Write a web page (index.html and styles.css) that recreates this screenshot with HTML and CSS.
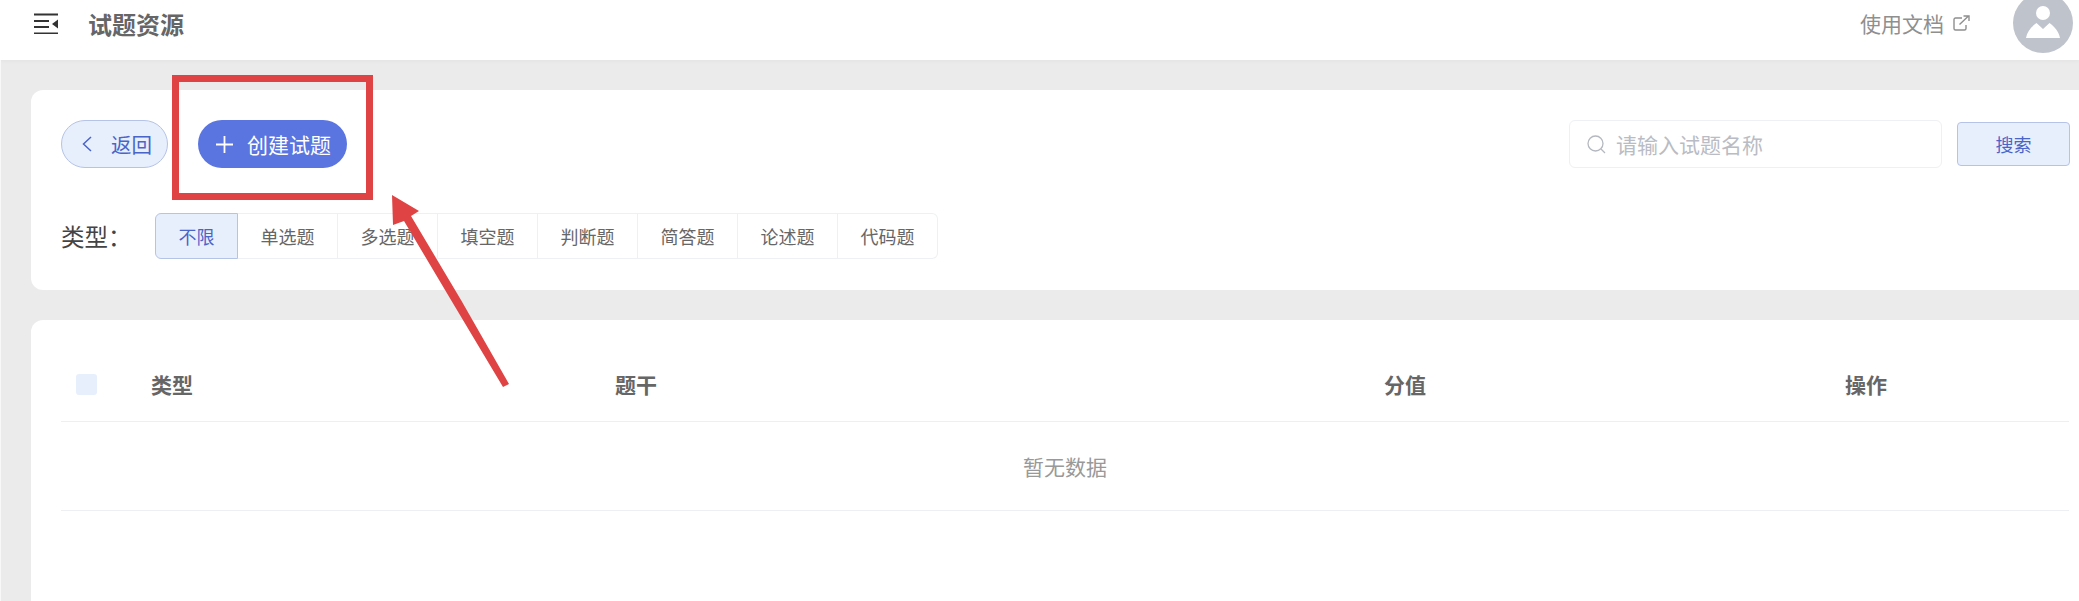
FILE: index.html
```html
<!DOCTYPE html>
<html lang="zh-CN">
<head>
    <meta charset="UTF-8">
    <meta name="viewport" content="width=device-width, initial-scale=1.0">
    <title>试题资源</title>
    <link rel="stylesheet" href="styles.css">
</head>
<body>

    <!-- Header -->
    <header class="top-bar">
        <svg class="menu-icon" width="24" height="21" viewBox="0 0 24 21">
            <path d="M0 1.500h24M0 8h15M0 14h15M0 20.500h24" stroke="#333" stroke-width="2" fill="none"/>
            <path d="M24 6.500v9l-6-4.500z" fill="#333"/>
        </svg>
        <span class="page-title">试题资源</span>
        <a class="doc-link" href="#">使用文档
            <svg width="17" height="16" viewBox="0 0 17 16" fill="none" stroke="#8f8f8f" stroke-width="1.4">
                <path d="M9 3H2.500A1.500 1.500 0 0 0 1 4.500V13.500A1.500 1.500 0 0 0 2.500 15H11.500A1.500 1.500 0 0 0 13 13.500V10"/>
                <path d="M6.500 9.500L15.500 1M10.500 1H16V6"/>
            </svg>
        </a>
        <div class="avatar">
            <svg width="60" height="60" viewBox="0 0 60 60">
                <circle cx="30" cy="20" r="7" fill="#fff"/>
                <path d="M13 45C14 39 18 34 23.500 30L30 36 36.500 30C42 34 46 39 47 45z" fill="#fff"/>
            </svg>
        </div>
    </header>

    <main class="content">
        <!-- Filter card -->
        <section class="card filter-card">
            <div class="toolbar">
                <button class="btn-back">
                    <svg width="10" height="16" viewBox="0 0 10 16" fill="none" stroke="#4a64c8" stroke-width="1.500"><path d="M9 1L1.500 8 9 15"/></svg>
                    返回
                </button>
                <button class="btn-create">
                    <svg width="17" height="17" viewBox="0 0 17 17" stroke="#fff" stroke-width="1.800"><path d="M8.500 0v17M0 8.500h17"/></svg>
                    创建试题
                </button>
                <div class="search-box">
                    <svg width="19" height="19" viewBox="0 0 19 19" fill="none" stroke="#b4b8c0" stroke-width="1.300"><circle cx="8.500" cy="8.500" r="7.500"/><path d="M14 14l4 4"/></svg>
                    <input type="text" placeholder="请输入试题名称">
                </div>
                <button class="btn-search">搜索</button>
            </div>
            <div class="type-row">
                <span class="type-label">类型：</span>
                <div class="type-group">
                    <a class="type-item active" href="#">不限</a>
                    <a class="type-item" href="#">单选题</a>
                    <a class="type-item" href="#">多选题</a>
                    <a class="type-item" href="#">填空题</a>
                    <a class="type-item" href="#">判断题</a>
                    <a class="type-item" href="#">简答题</a>
                    <a class="type-item" href="#">论述题</a>
                    <a class="type-item" href="#">代码题</a>
                </div>
            </div>
        </section>

        <!-- Question table -->
        <section class="card table-card">
            <table class="question-table">
                <thead>
                    <tr>
                        <th class="col-check"><span class="checkbox"></span></th>
                        <th class="col-type">类型</th>
                        <th class="col-stem">题干</th>
                        <th class="col-score">分值</th>
                        <th>操作</th>
                    </tr>
                </thead>
                <tbody>
                    <tr>
                        <td class="empty-text" colspan="5">暂无数据</td>
                    </tr>
                </tbody>
            </table>
        </section>
    </main>

    <!-- Red annotation drawn over the screenshot -->
    <div class="mark-box"></div>
    <svg class="mark-arrow" width="2079" height="601" viewBox="0 0 2079 601">
        <path d="M392 195L419 211 411 216 461 300 509 384 503 387 451 300 404 221 393 225z" fill="#e04343"/>
    </svg>

</body>
</html>
```

FILE: styles.css
```css
body {
    font-family: "Noto Sans CJK SC", "Liberation Sans", sans-serif;
    margin: 0;
    height: 601px;
    overflow: hidden;
    background-color: #ebebeb;
    position: relative;
}
button {
    font-family: inherit;
    cursor: pointer;
}
.top-bar {
    display: flex;
    align-items: center;
    height: 46px;
    padding: 0 6px 14px 34px;
    background-color: #fff;
    box-shadow: 0 1px 4px rgba(0, 0, 0, 0.04);
}
.menu-icon {
    margin-right: 30px;
}
.page-title {
    font-size: 24px;
    font-weight: bold;
    color: #666;
}
.doc-link {
    display: flex;
    align-items: center;
    gap: 9px;
    margin-left: auto;
    margin-right: 43px;
    font-size: 21px;
    color: #8f8f8f;
    text-decoration: none;
}
.avatar {
    width: 60px;
    height: 60px;
    border-radius: 50%;
    background-color: #bfc3cc;
    flex-shrink: 0;
}
.content {
    padding: 30px 0 0 30px;
    border-left: 1px solid #f8f8f8;
}
.card {
    background-color: #fff;
    border-radius: 12px 0 0 12px;
}
.filter-card {
    height: 170px;
    padding: 30px 9px 0 30px;
}
.toolbar {
    display: flex;
    align-items: center;
    height: 48px;
}
.btn-back,
.btn-create {
    display: flex;
    align-items: center;
    height: 48px;
    border-radius: 24px;
    font-size: 20.500px;
}
.btn-back {
    width: 107px;
    padding: 0 0 0 20px;
    gap: 19px;
    background-color: #e8effc;
    border: 1px solid #b5c3e6;
    color: #4a64c8;
}
.btn-create {
    width: 149px;
    margin-left: 30px;
    padding: 0 0 0 18px;
    gap: 14px;
    background-color: #5a74e0;
    border: none;
    color: #fff;
    font-size: 21px;
}
.search-box {
    display: flex;
    align-items: center;
    gap: 8px;
    box-sizing: border-box;
    width: 373px;
    height: 48px;
    margin-left: auto;
    padding-left: 17px;
    border: 1px solid #eef0f3;
    border-radius: 6px;
}
.search-box input {
    flex: 1;
    min-width: 0;
    border: none;
    outline: none;
    font-family: inherit;
    font-size: 21px;
}
.search-box input::placeholder {
    color: #b9bcc4;
}
.btn-search {
    box-sizing: border-box;
    width: 113px;
    height: 44px;
    margin-left: 15px;
    background-color: #e8effc;
    border: 1px solid #b5c3e6;
    border-radius: 4px;
    color: #4a64c8;
    font-size: 18px;
}
.type-row {
    display: flex;
    align-items: center;
    margin-top: 45px;
}
.type-label {
    width: 94px;
    font-size: 23.500px;
    color: #444;
}
.type-group {
    display: flex;
    height: 46px;
}
.type-item {
    display: flex;
    align-items: center;
    justify-content: center;
    box-sizing: border-box;
    width: 100px;
    border: 1px solid #eef0f3;
    border-left: none;
    font-size: 18px;
    color: #666;
    text-decoration: none;
}
.type-item:last-child {
    border-radius: 0 6px 6px 0;
}
.type-item.active {
    width: 83px;
    background-color: #e8effc;
    border: 1px solid #b5c3e6;
    border-radius: 6px 0 0 6px;
    color: #4a64c8;
}
.table-card {
    height: 300px;
    margin-top: 30px;
    padding: 0 9px 0 30px;
}
.question-table {
    width: 2008px;
    border-collapse: collapse;
    table-layout: fixed;
}
.question-table th {
    height: 101px;
    padding: 28px 0 0;
    box-sizing: border-box;
    text-align: left;
    font-size: 21px;
    font-weight: bold;
    color: #666;
    border-bottom: 1px solid #eeeff2;
}
.col-check {
    width: 90px;
}
.col-type {
    width: 464px;
}
.col-stem {
    width: 769px;
}
.col-score {
    width: 461px;
}
.checkbox {
    display: block;
    width: 21px;
    height: 21px;
    margin-left: 15px;
    background-color: #e8effc;
    border-radius: 3px;
}
.empty-text {
    height: 88px;
    padding: 0;
    text-align: center;
    font-size: 21px;
    color: #999;
    border-bottom: 1px solid #eeeff2;
}
.mark-box {
    position: absolute;
    left: 172px;
    top: 75px;
    width: 187px;
    height: 111px;
    border: 7px solid #e04343;
}
.mark-arrow {
    position: absolute;
    left: 0;
    top: 0;
}
```
